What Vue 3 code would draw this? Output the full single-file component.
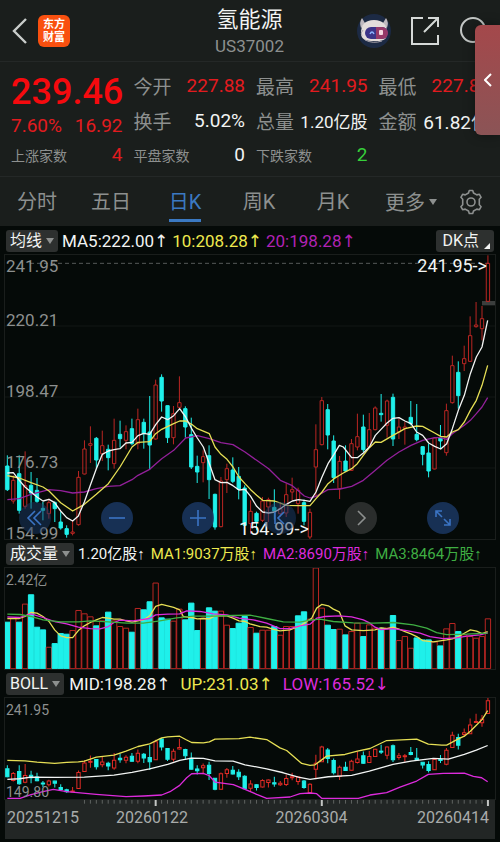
<script setup>
import { ref } from 'vue'

const tabs = ['分时', '五日', '日K', '周K', '月K']
const active = ref('日K')

const stats = [
  { label: '今开', value: '227.88', tone: 'red' },
  { label: '最高', value: '241.95', tone: 'red' },
  { label: '最低', value: '227.88', tone: 'red' },
  { label: '换手', value: '5.02%', tone: 'white' },
  { label: '总量', value: '1.20亿股', tone: 'white compact' },
  { label: '金额', value: '61.82亿', tone: 'white' }
]
const counts = [
  { label: '上涨家数', value: 4, tone: 'red' },
  { label: '平盘家数', value: 0, tone: 'white' },
  { label: '下跌家数', value: 2, tone: 'green' }
]

// [up, high, body top, body bottom, low] in plot units
const candles = [
  [0, 615, 647, 718, 722], [1, 675, 690, 752, 760], [0, 615, 670, 780, 790], [1, 603, 706, 768, 775],
  [0, 665, 705, 728, 775], [0, 683, 720, 753, 758], [0, 755, 774, 780, 810], [1, 745, 757, 790, 805],
  [0, 753, 757, 775, 815], [0, 785, 815, 833, 838], [0, 825, 835, 852, 862], [1, 810, 845, 849, 855],
  [1, 662, 681, 823, 826], [1, 570, 596, 671, 672], [1, 528, 580, 585, 638], [0, 560, 564, 629, 654],
  [1, 541, 586, 610, 632], [0, 583, 597, 622, 660], [1, 505, 570, 640, 655], [0, 511, 552, 565, 592],
  [1, 525, 544, 570, 597], [0, 505, 535, 580, 585], [1, 475, 508, 580, 597], [0, 505, 516, 550, 595],
  [0, 437, 545, 584, 658], [1, 388, 404, 566, 568], [0, 372, 381, 452, 484], [0, 465, 466, 562, 578],
  [1, 467, 490, 562, 582], [1, 378, 457, 471, 475], [0, 468, 475, 530, 562], [0, 502, 553, 650, 656],
  [0, 616, 648, 665, 698], [1, 600, 619, 637, 696], [0, 585, 616, 688, 746], [0, 730, 732, 830, 838],
  [1, 680, 692, 829, 831], [1, 640, 655, 688, 728], [0, 621, 659, 693, 698], [0, 650, 678, 717, 747],
  [0, 705, 713, 825, 828], [1, 750, 783, 820, 850], [0, 784, 789, 813, 840], [1, 740, 752, 810, 815],
  [1, 742, 748, 770, 815], [0, 717, 771, 782, 808], [1, 755, 775, 790, 800], [1, 700, 733, 788, 800],
  [1, 682, 718, 725, 750], [1, 712, 720, 760, 790], [0, 748, 757, 813, 825], [1, 775, 786, 860, 866],
  [1, 522, 598, 650, 740], [1, 440, 451, 583, 585], [0, 461, 478, 554, 597], [0, 555, 572, 682, 698],
  [1, 617, 633, 715, 746], [0, 585, 632, 662, 665], [1, 566, 580, 660, 662], [1, 490, 559, 590, 600],
  [0, 493, 530, 598, 605], [1, 488, 538, 590, 592], [1, 468, 473, 538, 540], [0, 431, 489, 493, 514],
  [1, 448, 452, 525, 562], [0, 430, 441, 566, 587], [1, 505, 530, 545, 566], [1, 515, 530, 534, 583],
  [0, 452, 501, 520, 525], [0, 461, 552, 568, 573], [0, 588, 589, 612, 645], [0, 580, 608, 662, 681],
  [1, 560, 563, 656, 657], [0, 524, 563, 572, 595], [1, 460, 481, 607, 616], [1, 316, 346, 457, 460],
  [0, 333, 366, 436, 475], [1, 286, 325, 340, 362], [1, 198, 256, 333, 335], [1, 155, 224, 229, 232],
  [1, 167, 205, 235, 270], [1, 15, 39, 153, 155]
]

// top of each volume bar, negative = falling day
const volumes = [
  -247, 236, -247, 193, -165, -262, -270, 322, -311, -281, -283, 272, 212, 222, 231, -258, 243, -217,
  243, 260, 265, -277, 206, -210, -186, 130, -234, -238, 244, 208, -240, -190, -272, 235, -204, -214,
  214, 256, -266, -250, -230, 263, -280, 271, 271, -260, 286, 260, 260, -228, -216, 238, 85, 205,
  -256, -269, 268, -285, 275, 250, -290, 255, 265, -265, 265, -227, 302, 290, 325, -294, -300, -300,
  306, -318, 267, 251, -275, 285, 290, 295, 290, 237
]

const ma = {
  purple: '22,748 58,745 93,732 147,718 182,721 218,728 253,725 289,715 325,708 360,706 396,688 414,675 449,657 485,625 521,600 557,563 592,556 628,565 663,577 699,583 735,605 770,630 806,655 841,690 877,706 913,737 930,743 948,738 984,718 1020,716 1055,708 1090,690 1126,660 1161,630 1197,605 1233,585 1268,570 1304,562 1322,562 1340,567 1357,550 1393,525 1411,510 1429,490 1446,470 1463,442',
  yellow: '22,676 58,683 93,697 129,710 147,722 182,757 218,782 253,762 289,732 325,700 360,650 378,620 396,590 414,576 449,574 467,550 485,537 521,520 539,512 557,512 575,522 592,535 628,550 645,590 663,612 681,627 699,650 717,680 735,700 752,718 770,735 788,750 824,752 859,765 895,766 930,766 948,745 966,725 984,700 1002,685 1030,668 1055,655 1072,640 1090,615 1108,592 1126,575 1143,576 1179,555 1215,535 1250,527 1268,528 1304,548 1322,558 1340,560 1357,545 1375,538 1393,515 1411,480 1429,450 1446,405 1463,345',
  white: '22,668 40,667 58,690 75,710 93,725 111,740 129,752 147,747 164,757 182,782 200,802 218,812 235,797 253,755 271,705 289,655 307,612 325,602 342,598 360,595 378,578 396,576 414,556 431,549 449,552 467,523 485,500 503,508 521,496 539,475 557,500 575,535 592,563 610,590 628,640 645,688 663,697 681,696 699,706 717,719 735,717 752,738 770,768 788,785 806,788 824,785 841,775 859,762 877,752 895,748 913,750 930,753 948,725 966,680 984,640 1002,612 1018,585 1030,590 1055,622 1072,622 1090,608 1108,590 1126,555 1143,537 1161,518 1179,504 1197,502 1215,512 1233,520 1250,545 1268,555 1286,578 1304,588 1322,596 1340,580 1357,535 1375,480 1393,435 1411,370 1429,320 1446,290 1463,210'
}
const volMa = {
  yellow: '22,236 58,236 75,230 93,218 111,220 129,230 147,245 164,270 182,288 200,293 218,293 235,272 253,258 271,248 289,240 307,233 325,235 342,238 360,238 378,243 396,247 414,243 431,240 449,228 467,200 485,194 503,198 521,203 539,210 550,230 575,233 592,237 610,236 628,237 645,228 663,228 681,228 699,235 717,243 735,245 750,252 780,260 800,262 818,268 840,273 870,270 890,262 905,255 920,245 935,235 950,205 965,194 985,198 1000,208 1018,216 1035,258 1055,270 1090,272 1125,270 1143,264 1161,266 1179,262 1197,268 1215,275 1233,282 1250,290 1268,302 1300,306 1320,303 1340,300 1357,297 1375,290 1393,280 1411,270 1430,274 1446,281 1463,275',
  magenta: '22,231 58,233 93,222 129,233 164,245 200,252 235,262 271,266 300,267 325,260 342,248 360,241 400,243 449,236 467,225 503,223 539,222 560,213 600,215 640,222 681,225 717,235 760,240 800,250 840,266 870,266 900,258 930,253 950,235 975,230 1018,228 1055,231 1090,240 1110,250 1125,262 1143,269 1179,266 1220,272 1260,280 1290,290 1330,296 1370,294 1400,289 1440,285 1463,279',
  lime: '22,223 60,224 93,230 129,240 182,246 235,246 271,243 325,246 380,250 430,250 480,243 530,234 580,229 640,229 700,227 750,226 800,236 850,246 900,247 930,241 960,238 1000,245 1060,249 1120,250 1180,248 1240,255 1280,265 1310,278 1340,284 1400,283 1463,280'
}
const boll = {
  yellow: '22,268 75,269 111,273 164,277 200,274 235,272 253,270 289,258 342,252 378,240 414,226 449,218 485,200 503,197 539,195 557,205 575,214 610,215 628,212 645,204 717,202 750,198 800,205 840,230 860,238 880,255 905,277 930,283 945,281 960,270 980,255 1035,250 1072,240 1110,232 1160,208 1250,204 1285,219 1325,222 1340,222 1357,213 1375,203 1393,195 1411,180 1429,162 1446,145 1463,118',
  white: '22,325 58,323 93,318 164,319 253,318 342,312 396,304 449,293 503,280 539,268 575,261 610,262 645,269 699,270 735,281 800,293 850,305 895,318 930,325 985,317 1055,313 1108,300 1179,280 1233,270 1300,262 1345,264 1393,250 1429,237 1463,223',
  magenta: '22,382 60,382 93,371 129,362 160,355 200,362 289,370 378,377 431,375 485,372 510,362 539,343 560,320 575,308 610,307 628,314 645,333 700,341 735,355 770,370 800,382 870,378 900,368 930,366 950,368 965,382 1075,382 1110,372 1160,365 1200,348 1250,330 1285,310 1330,307 1393,306 1420,316 1445,320 1463,332'
}

const x = i => 22 + i * 17.8
const bollY = y => 80 + (y - 14) * 0.3367

function shape(c, i, fy = y => y) {
  const [up, h, t, b, l] = [c[0], ...c.slice(1).map(fy)]
  const cx = x(i)
  return {
    up,
    wick: `M${cx} ${h}V${t}M${cx} ${b}V${l}`,
    x: cx - 5,
    y: t,
    h: Math.max(b - t, 3)
  }
}
const mainShapes = candles.map((c, i) => shape(c, i))
const bollShapes = candles.map((c, i) => shape(c, i, bollY))

const prices = [
  { text: '241.95', top: 4 },
  { text: '220.21', top: 23 },
  { text: '198.47', top: 48 },
  { text: '176.73', top: 73 },
  { text: '154.99', top: 98 }
]
const ticks = candles.map((_, i) => ({ x: x(i), big: [25, 53, 81].includes(i) })).filter((_, i) => i > 12)
</script>

<template>
  <div class="app">
    <header class="head">
      <div class="side">
        <button class="icon" aria-label="返回">
          <svg width="16" height="28" viewBox="0 0 16 28"><path d="M14 2 2 14l12 12" stroke="#c9cdcb" stroke-width="2.4" /></svg>
        </button>
        <div class="logo"><span>东方</span><span>财富</span></div>
      </div>
      <div class="title">
        <h1>氢能源</h1>
        <p>US37002</p>
      </div>
      <div class="side end">
        <button class="icon" aria-label="助手">
          <svg width="34" height="34" viewBox="0 0 34 34">
            <circle cx="17" cy="17" r="17" fill="#1c2a44" />
            <path d="M4 14q-2-6 1-10l3 5 5-2zM30 14q2-6-1-10l-3 5-5-2z" fill="#bfb9bf" />
            <path d="M4 19C4 11 8 6 17 6s13 5 13 13-5 8-13 8S4 26 4 19z" fill="#e4dddb" />
            <rect x="8" y="13" width="23" height="12" rx="6" fill="#3c3488" />
            <path d="M19 13h6a6 6 0 0 1 0 12h-6z" fill="#963969" />
            <path d="M13 20q2-4 4 0" stroke="#8fb4ff" stroke-width="1.4" />
            <rect x="22" y="16" width="4" height="5" rx="1" fill="#f4d9e2" />
            <path d="M5 22q-2-3 1-6M8 26q8 4 17 1" stroke="#aaa4ad" />
          </svg>
        </button>
        <button class="icon" aria-label="分享">
          <svg width="28" height="28" viewBox="0 0 28 28"><path d="M12 1H1v26h26V18M17 1h10v9M26 2 13 15" stroke="#d5d9d7" stroke-width="2" /></svg>
        </button>
        <button class="icon" aria-label="搜索">
          <svg width="28" height="28" viewBox="0 0 28 28"><circle cx="14" cy="13" r="12" stroke="#c3c7c5" stroke-width="2" /><path d="m22 21 6 6" stroke="#c3c7c5" stroke-width="2" /></svg>
        </button>
      </div>
    </header>
    <button class="drawer" aria-label="展开">
      <svg width="8" height="14" viewBox="0 0 8 14"><path d="M7 1 1 7l6 6" stroke="#fff" stroke-width="2" /></svg>
    </button>

    <section class="quote">
      <div class="now red">
        <strong>239.46</strong>
        <div><span>7.60%</span><span>16.92</span></div>
      </div>
      <dl v-for="s in stats" :key="s.label" class="stat">
        <dt>{{ s.label }}</dt>
        <dd :class="s.tone">{{ s.value }}</dd>
      </dl>
      <dl v-for="c in counts" :key="c.label" class="stat small">
        <dt>{{ c.label }}</dt>
        <dd :class="c.tone">{{ c.value }}</dd>
      </dl>
    </section>

    <nav class="tabs">
      <button v-for="t in tabs" :key="t" :class="{ on: active === t }" @click="active = t"><span>{{ t }}</span></button>
      <button>更多<i class="caret"></i></button>
      <button aria-label="设置">
        <svg width="26" height="26" viewBox="0 0 26 26" stroke="#8d908f" stroke-width="1.6" stroke-linejoin="round">
          <path d="M10.5 4 11.3 1.5h3.4L15.5 4l3.3 1.900 2.600-.6 1.700 3-1.800 1.900v5.600l1.800 1.900-1.700 3-2.600-.6L15.500 22l-.8 2.500h-3.400L10.500 22l-3.300-1.900-2.600.6-1.700-3 1.800-1.900v-5.600L2.900 8.300l1.700-3 2.600.6z" />
          <circle cx="13" cy="13" r="4" />
        </svg>
      </button>
    </nav>

    <div class="legend tight">
      <button class="pick">均线<i class="caret"></i></button>
      <span class="white">MA5:222.00↑</span>
      <span class="yellow">10:208.28↑</span>
      <span class="purple">20:198.28↑</span>
      <button class="pick dk">DK点<i class="corner"></i></button>
    </div>
    <div class="plot main">
      <svg viewBox="15 14 1470 852" preserveAspectRatio="none">
        <path class="grid" d="M15 227H1485M15 440H1485M15 653H1485" />
        <path class="dash" d="M90 39H1470" />
        <rect x="1446" y="152" width="39" height="13" fill="#3b3e3d" />
        <g v-for="(s, i) in mainShapes" :key="i" :class="s.up ? 'up' : 'down'">
          <path :d="s.wick" />
          <rect :x="s.x" :y="s.y" width="10" :height="s.h" />
        </g>
        <polyline v-for="(p, name) in ma" :key="name" :class="name" :points="p" />
      </svg>
      <span v-for="p in prices" :key="p.text" class="price" :style="{ top: p.top + '%' }">{{ p.text }}</span>
      <span class="mark high">241.95-&gt;</span>
      <span class="mark low">154.99-&gt;</span>
      <div class="tools">
        <button class="faint" aria-label="最早"><svg viewBox="0 0 32 32"><path d="M16 9l-7 7 7 7M22 9l-7 7 7 7" /></svg></button>
        <button aria-label="缩小"><svg viewBox="0 0 32 32"><path d="M8 16h16" /></svg></button>
        <button aria-label="放大"><svg viewBox="0 0 32 32"><path d="M8 16h16M16 8v16" /></svg></button>
        <button class="faint" aria-label="向左"><svg viewBox="0 0 32 32"><path d="M11 10v12M20 10l-6 6 6 6" /></svg></button>
        <button class="gray" aria-label="向右"><svg viewBox="0 0 32 32"><path d="M13 9l7 7-7 7" /></svg></button>
        <button aria-label="全屏"><svg viewBox="0 0 32 32"><path d="M9 15V9h6M9 9l6 6M23 17v6h-6M23 23l-6-6" /></svg></button>
      </div>
    </div>

    <div class="legend narrow">
      <button class="pick">成交量<i class="caret"></i></button>
      <span class="white">1.20亿股↑</span>
      <span class="yellow">MA1:9037万股↑</span>
      <span class="magenta">MA2:8690万股↑</span>
      <span class="lime">MA3:8464万股↑</span>
    </div>
    <div class="plot sub">
      <svg viewBox="15 85 1470 302" preserveAspectRatio="none">
        <g v-for="(v, i) in volumes" :key="i" :class="v > 0 ? 'up' : 'down'">
          <rect :x="x(i) - 8" :y="Math.abs(v)" width="16" :height="386 - Math.abs(v)" />
        </g>
        <polyline v-for="(p, name) in volMa" :key="name" :class="name" :points="p" />
      </svg>
      <span class="scale first">2.42亿</span>
    </div>

    <div class="legend">
      <button class="pick">BOLL<i class="caret"></i></button>
      <span class="white">MID:198.28↑</span>
      <span class="yellow">UP:231.03↑</span>
      <span class="magenta">LOW:165.52↓</span>
    </div>
    <div class="plot sub">
      <svg viewBox="15 80 1470 304" preserveAspectRatio="none">
        <g v-for="(s, i) in bollShapes" :key="i" :class="s.up ? 'up bright' : 'down'">
          <path :d="s.wick" />
          <rect :x="s.x" :y="s.y" width="10" :height="s.h" />
        </g>
        <polyline v-for="(p, name) in boll" :key="name" :class="name" :points="p" />
      </svg>
      <span class="scale first">241.95</span>
      <span class="scale last">149.80</span>
    </div>
    <div class="axis">
      <svg viewBox="15 0 1470 24" preserveAspectRatio="none">
        <path v-for="t in ticks" :key="t.x" :class="{ big: t.big }" :d="`M${t.x} 2V${t.big ? 21 : 14}`" />
      </svg>
      <div class="dates">
        <time>20251215</time>
        <time>20260122</time>
        <time>20260304</time>
        <time>20260414</time>
      </div>
    </div>
  </div>
</template>

<style>
body {
  background: #0b161d;
}
</style>

<style scoped>
.app {
  position: relative;
  overflow: hidden;
  background: #050a08;
  font-family: Roboto, "DejaVu Sans", "Noto Sans CJK SC", sans-serif;
  color: #8d908f;
}
button {
  display: flex;
  align-items: center;
  justify-content: center;
  padding: 0;
  border: 0;
  background: none;
  font: inherit;
  color: inherit;
  cursor: pointer;
}
svg {
  display: block;
  fill: none;
}
h1, p, dl, dd {
  margin: 0;
}
.red { color: #e21b1f; }
.white { color: #f2f4f3; stroke: #f2f4f3; }
.green { color: #37d13b; }
.yellow { color: #eee94f; stroke: #e6df55; }
.purple { color: #b123b4; stroke: #93209a; }
.magenta { color: #dd2bdc; stroke: #dd2bdc; }
.lime { color: #3fae43; stroke: #3fae43; }

.head {
  display: grid;
  grid-template-columns: 1fr auto 1fr;
  align-items: center;
  height: 61px;
  padding: 0 13px 0 12px;
  background: #1a1e1c;
  border-bottom: 1px solid #242827;
}
.side {
  display: flex;
  align-items: center;
  gap: 10px;
}
.end {
  justify-content: flex-end;
  gap: 20px;
}
.logo {
  display: flex;
  flex-direction: column;
  align-items: center;
  justify-content: center;
  width: 32px;
  height: 32px;
  border-radius: 6px;
  background: #f9500f;
  color: #fff;
  font-size: 11px;
  font-weight: 700;
  line-height: 13px;
}
.title {
  padding-top: 3px;
  text-align: center;
}
.title h1 {
  font-size: 22px;
  font-weight: 400;
  line-height: 28px;
  color: #f2f4f3;
}
.title p {
  font-size: 17px;
  line-height: 25px;
}
.drawer {
  position: absolute;
  top: 25px;
  right: 0;
  width: 25px;
  height: 110px;
  border-radius: 6px 0 0 6px;
  background: linear-gradient(#a4484b, #8b5456);
  box-shadow: 0 0 12px rgba(0, 0, 0, 0.4);
}

.quote {
  display: grid;
  grid-template-columns: repeat(4, minmax(0, 1fr));
  grid-template-rows: 36px 35px 33px;
  column-gap: 11px;
  padding: 5px 10px 5px 11px;
  background: #1a1e1c;
  border-bottom: 1px solid #242827;
}
.now {
  grid-row: 1 / 3;
  padding-top: 6px;
}
.now strong {
  display: block;
  font-size: 36px;
  font-weight: 500;
  line-height: 38px;
  color: #f50a0e;
}
.now div {
  display: flex;
  justify-content: space-between;
  font-size: 19px;
  line-height: 30px;
}
.stat {
  display: flex;
  align-items: center;
  justify-content: space-between;
  font-size: 19px;
  white-space: nowrap;
}
.stat .compact {
  font-size: 17px;
}
.small dt {
  font-size: 14px;
}

.tabs {
  display: grid;
  grid-template-columns: repeat(5, 74fr) 82fr 38fr;
  height: 49px;
  padding-right: 10px;
  background: #1a1e1c;
  font-size: 20px;
}
.tabs span {
  padding-top: 4px;
  line-height: 34px;
  border-bottom: 3px solid transparent;
}
.tabs .on {
  color: #3b79c2;
}
.tabs .on span {
  border-color: #3b79c2;
}
.caret {
  margin-left: 4px;
  border: 4px solid transparent;
  border-top: 6px solid #8d908f;
  border-bottom: 0;
}

.legend {
  display: flex;
  align-items: center;
  height: 29px;
  padding: 0 6px;
  gap: 10px;
  font-size: 17px;
  line-height: 22px;
  white-space: nowrap;
}
.legend .pick + span {
  margin-left: -5px;
}
.tight {
  gap: 4px;
}
.legend.tight .pick + span {
  margin-left: 0;
}
.narrow {
  gap: 6px;
  font-family: Roboto, "Liberation Sans", "Noto Sans CJK SC", sans-serif;
  font-size: 15px;
}
.legend.narrow .pick + span {
  margin-left: -2px;
}
.pick {
  height: 22px;
  padding: 0 4px;
  border-radius: 3px;
  background: #2d302f;
  color: #f2f4f3;
  font-size: 16px;
}
.dk {
  margin-left: auto;
  padding-left: 6px;
}
.corner {
  align-self: flex-end;
  margin: 0 0 3px 5px;
  border: 3px solid #f2f4f3;
  border-top-color: transparent;
  border-left-color: transparent;
}

.plot {
  position: relative;
  margin: 0 5px;
  outline: 1px solid #1a1e1c;
}
.plot > svg {
  width: 100%;
  height: 100%;
}
.plot path, .plot rect, .plot polyline {
  vector-effect: non-scaling-stroke;
}
.main {
  height: 284px;
}
.sub {
  height: 101px;
}
.plot polyline {
  stroke-width: 1.3;
  stroke-linejoin: round;
}
.grid {
  stroke: #121715;
}
.dash {
  stroke: #565958;
  stroke-dasharray: 4 3;
}
.up {
  stroke: #bb2623;
}
.bright {
  stroke: #e02b26;
}
.down {
  stroke: #1ff0ea;
}
.down rect {
  fill: #1ff0ea;
}
.price, .mark, .scale {
  position: absolute;
  left: 1px;
  font-size: 17px;
  line-height: 20px;
}
.price {
  margin-top: -10px;
}
.mark {
  color: #f2f4f3;
  font-size: 18px;
}
.high {
  top: 1px;
  left: auto;
  right: 8px;
}
.low {
  bottom: 0;
  left: auto;
  right: 38%;
}
.scale {
  font-size: 14px;
}
.first {
  top: 2px;
}
.last {
  bottom: -3px;
}
.tools {
  position: absolute;
  left: 0;
  right: 0;
  bottom: 5px;
  display: flex;
  justify-content: space-between;
  padding: 0 36px 0 14px;
}
.tools button {
  width: 32px;
  height: 32px;
  border-radius: 50%;
  background: rgba(27, 58, 104, 0.8);
}
.tools svg {
  width: 32px;
  stroke: #3b74c4;
  stroke-width: 1.6;
}
.tools .faint {
  background: rgba(27, 58, 104, 0.5);
}
.tools .gray {
  background: #2a2d2c;
}
.gray svg {
  stroke: #8d908f;
}

.axis {
  height: 40px;
  margin: 0 5px 3px;
  background: #222625;
}
.axis svg {
  width: 100%;
  height: 8px;
  stroke: #5f6361;
}
.axis path {
  vector-effect: non-scaling-stroke;
}
.axis .big {
  stroke: #c3c6c4;
  stroke-width: 2;
}
.dates {
  display: grid;
  grid-template-columns: 95fr 112fr 220fr 63fr;
  padding: 0 6px 0 2px;
  font-size: 16px;
  line-height: 22px;
  color: #a9acab;
}
.dates time:nth-child(2), .dates time:nth-child(3) {
  justify-self: center;
}
.dates time:last-child {
  justify-self: end;
}
</style>
